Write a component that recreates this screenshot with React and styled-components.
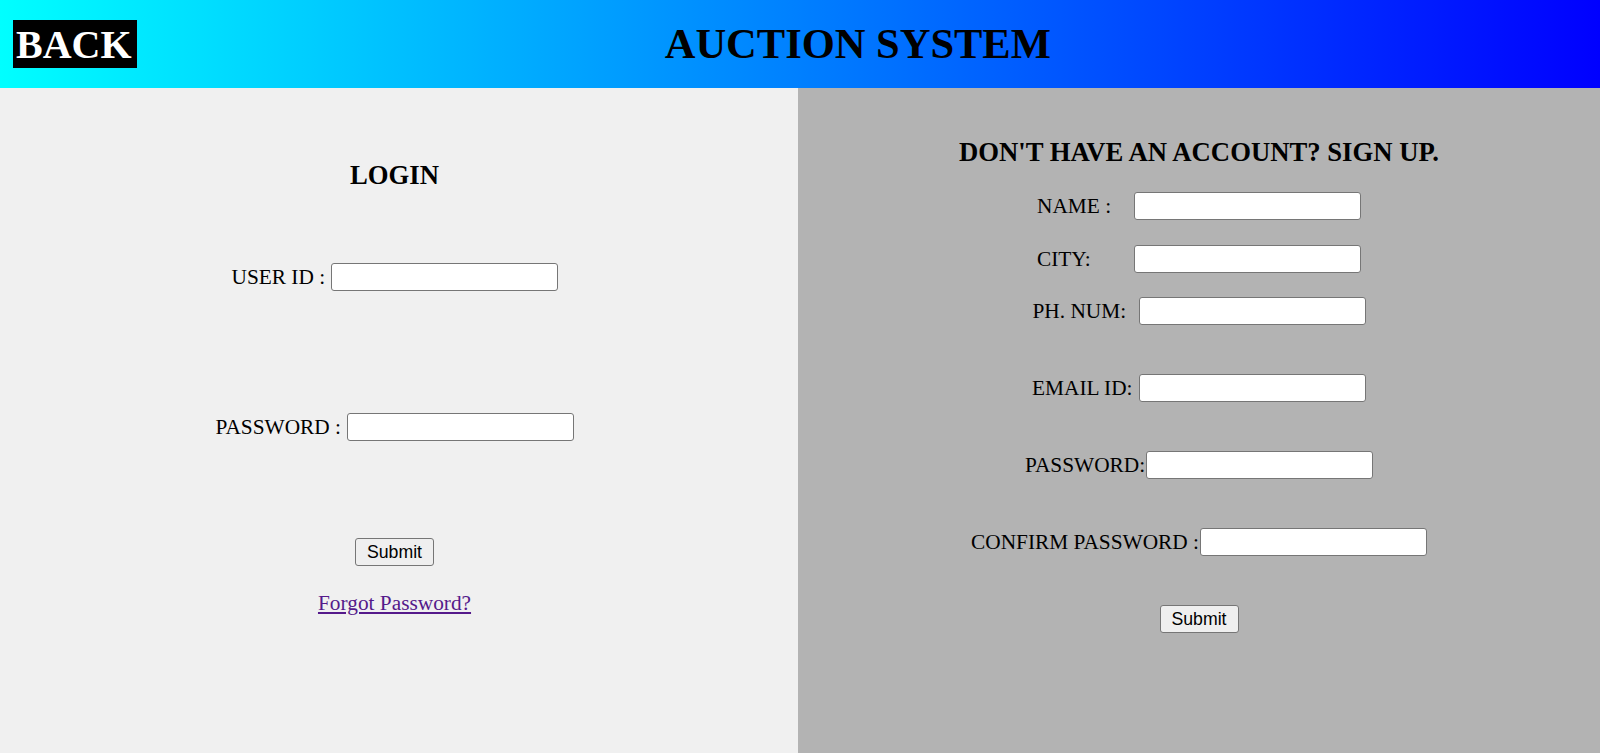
import React from "react";
import styled, { createGlobalStyle } from "styled-components";

const GlobalStyle = createGlobalStyle`
  body {
    margin: 0;
    font-family: "Liberation Serif", "Times New Roman", serif;
    color: #000;
  }
`;

const Header = styled.header`
  display: flex;
  align-items: center;
  height: 88px;
  padding-left: 13px;
  background: linear-gradient(to right, #00ffff, #0000ff);
`;

const BackButton = styled.a`
  display: block;
  height: 48px;
  line-height: 50px;
  padding: 0 5px 0 3px;
  background: #000;
  color: #fff;
  font-size: 40px;
  font-weight: bold;
  text-decoration: none;
  cursor: pointer;
`;

const Title = styled.h1`
  flex: 1;
  margin: 0;
  padding-right: 21px;
  text-align: center;
  font-size: 42.5px;
  line-height: 48px;
  font-weight: bold;
`;

const Main = styled.main`
  display: grid;
  grid-template-columns: 798px 1fr;
  min-height: calc(100vh - 88px);
`;

const Panel = styled.section`
  display: flex;
  flex-direction: column;
  align-items: center;
  background: ${(p) => p.$bg};
  padding-right: ${(p) => p.$shift || 0}px;
`;

const Heading = styled.h3`
  margin: ${(p) => p.$top}px 0 0;
  font-size: 26.7px;
  line-height: 30px;
  font-weight: bold;
  white-space: nowrap;
`;

const Row = styled.div`
  display: flex;
  align-items: center;
  height: 28px;
  margin-top: ${(p) => p.$top}px;
  font-size: 21.33px;
  line-height: 28px;
`;

const Label = styled.label`
  flex: 0 0 ${(p) => p.$w}px;
  white-space: nowrap;
`;

const Input = styled.input`
  box-sizing: border-box;
  width: 227px;
  height: 28px;
  flex: 0 0 227px;
  margin: 0;
  border: 1px solid #767676;
  border-radius: 3px;
  background: #fff;
`;

const Button = styled.button`
  width: 79px;
  height: 28px;
  padding: 0;
  margin-top: ${(p) => p.$top}px;
  font-family: "Liberation Sans", Arial, sans-serif;
  font-size: 17.7px;
  color: #000;
  background: #efefef;
  border: 1px solid #767676;
  border-radius: 3px;
`;

const Link = styled.a`
  margin-top: ${(p) => p.$top}px;
  font-size: 21.33px;
  line-height: 28px;
  color: #551a8b;
  text-decoration: underline;
`;

const signupRows = [
  { label: "NAME :", w: 97, top: 25 },
  { label: "CITY:", w: 97, top: 25 },
  { label: "PH. NUM:", w: 106, top: 24 },
  { label: "EMAIL ID:", w: 107, top: 49, type: "email" },
  { label: "PASSWORD:", w: 121, top: 49, type: "password" },
  { label: "CONFIRM PASSWORD :", w: 229, top: 49, type: "password" },
];

export default function App() {
  return (
    <>
      <GlobalStyle />
      <Header>
        <BackButton>BACK</BackButton>
        <Title>AUCTION SYSTEM</Title>
      </Header>
      <Main>
        <Panel $bg="#f0f0f0" $shift={9}>
          <Heading $top={72}>LOGIN</Heading>
          <Row $top={73}>
            <Label $w={99}>USER ID :</Label>
            <Input type="text" />
          </Row>
          <Row $top={122}>
            <Label $w={131}>PASSWORD :</Label>
            <Input type="password" />
          </Row>
          <Button $top={97}>Submit</Button>
          <Link href="#" $top={23}>
            Forgot Password?
          </Link>
        </Panel>
        <Panel $bg="#b3b3b3">
          <Heading $top={49}>DON'T HAVE AN ACCOUNT? SIGN UP.</Heading>
          {signupRows.map((r) => (
            <Row key={r.label} $top={r.top}>
              <Label $w={r.w}>{r.label}</Label>
              <Input type={r.type || "text"} />
            </Row>
          ))}
          <Button $top={49}>Submit</Button>
        </Panel>
      </Main>
    </>
  );
}
